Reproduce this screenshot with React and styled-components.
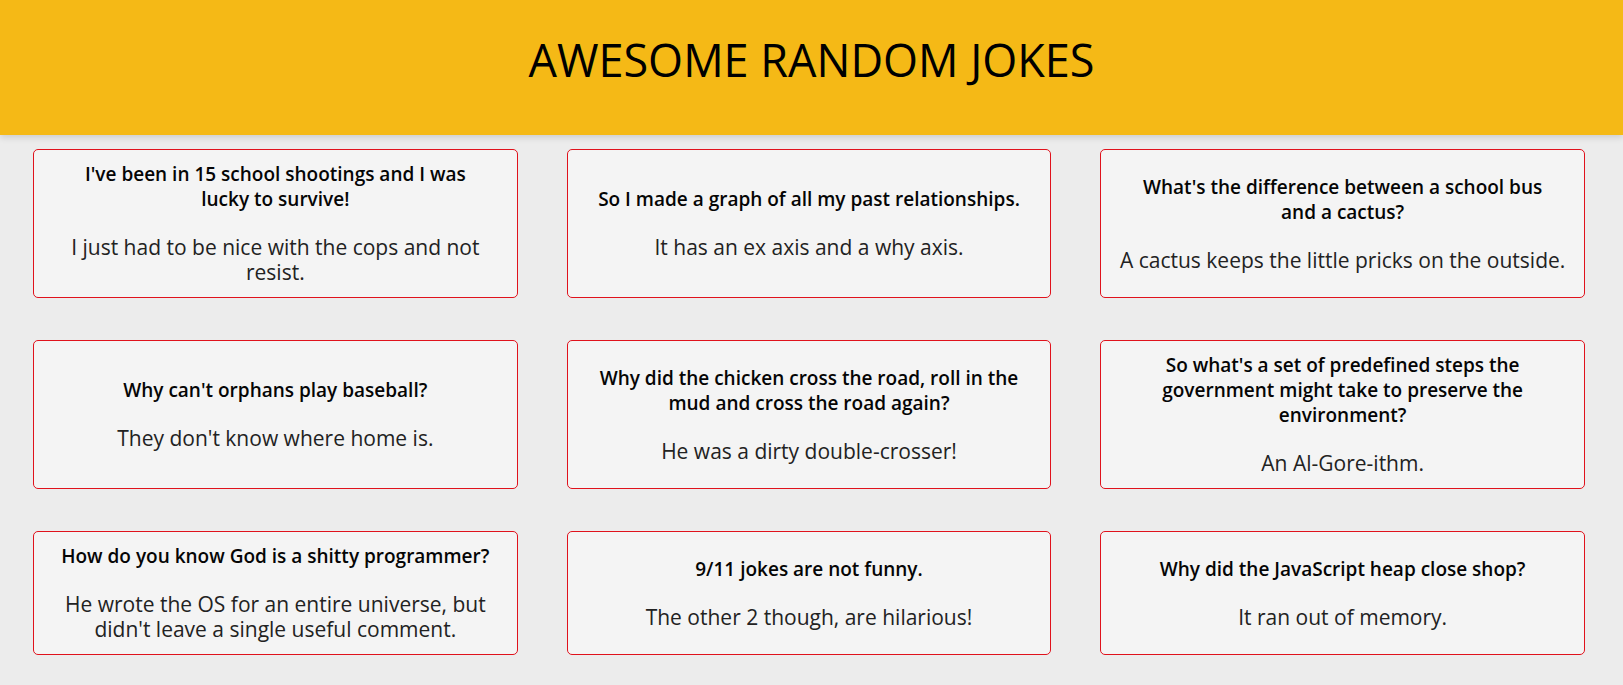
import React from "react";
import styled, { createGlobalStyle } from "styled-components";

const GlobalStyle = createGlobalStyle`
  html, body { margin: 0; padding: 0; }
  body {
    background: #ececec;
    font-family: "Open Sans", "Noto Sans", sans-serif;
    color: #111;
  }
`;

const Header = styled.header`
  height: 135px;
  background: #f5b916;
  display: flex;
  align-items: center;
  justify-content: center;
  box-shadow: 0 3px 6px rgba(0, 0, 0, 0.12);
  position: relative;
  z-index: 1;
`;

const Title = styled.h1`
  margin: 0;
  margin-top: -16px;
  font-size: 45px;
  font-weight: 500;
  color: #000;
`;

const Grid = styled.main`
  display: grid;
  grid-template-columns: repeat(3, 1fr);
  column-gap: 49px;
  row-gap: 42px;
  padding: 14px 38px 30px 33px;
`;

const Card = styled.article`
  background: #f4f4f4;
  border: 1px solid #e0121c;
  border-radius: 5px;
  padding: 12px 12px;
  display: flex;
  flex-direction: column;
  justify-content: center;
  align-items: center;
  gap: 23px;
  text-align: center;
`;

const Setup = styled.h3`
  margin: 0;
  max-width: 431px;
  font-size: 19px;
  line-height: 25px;
  font-weight: 600;
  color: #050505;
`;

const Punchline = styled.p`
  margin: 0;
  font-size: 21px;
  line-height: 25px;
  font-weight: 400;
  color: #222;
  padding: 0 6px;
`;

const jokes = [
  ["I've been in 15 school shootings and I was lucky to survive!", "I just had to be nice with the cops and not resist."],
  ["So I made a graph of all my past relationships.", "It has an ex axis and a why axis."],
  ["What's the difference between a school bus and a cactus?", "A cactus keeps the little pricks on the outside."],
  ["Why can't orphans play baseball?", "They don't know where home is."],
  ["Why did the chicken cross the road, roll in the mud and cross the road again?", "He was a dirty double-crosser!"],
  ["So what's a set of predefined steps the government might take to preserve the environment?", "An Al-Gore-ithm."],
  ["How do you know God is a shitty programmer?", "He wrote the OS for an entire universe, but didn't leave a single useful comment."],
  ["9/11 jokes are not funny.", "The other 2 though, are hilarious!"],
  ["Why did the JavaScript heap close shop?", "It ran out of memory."],
];

export default function App() {
  return (
    <>
      <GlobalStyle />
      <Header>
        <Title>AWESOME RANDOM JOKES</Title>
      </Header>
      <Grid>
        {jokes.map(([setup, punch], i) => (
          <Card key={i}>
            <Setup>{setup}</Setup>
            <Punchline>{punch}</Punchline>
          </Card>
        ))}
      </Grid>
    </>
  );
}
